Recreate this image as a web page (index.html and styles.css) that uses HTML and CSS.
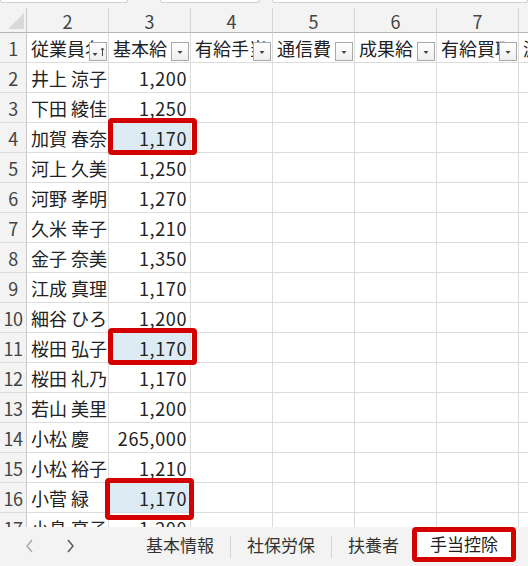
FILE: index.html
```html
<!DOCTYPE html>
<html lang="ja">
<head>
<meta charset="utf-8">
<title>手当控除</title>
<link rel="stylesheet" href="styles.css">
</head>
<body>
<div class="app">
  <div class="topbar">
    <div class="tb tb1"></div>
    <div class="tb tb2"></div>
    <div class="tb tb3"></div>
  </div>
  <div class="grid">
    <div class="corner"><svg width="16" height="16" viewBox="0 0 16 16"><polygon points="16,0 16,16 0,16" fill="#d9d9d9"/></svg></div>
    <div class="ch">2</div><div class="ch">3</div><div class="ch">4</div><div class="ch">5</div><div class="ch">6</div><div class="ch">7</div><div class="ch last">8</div>

    <div class="rh">1</div>
    <div class="c hd">従業員名<span class="fb"><svg width="18" height="19" viewBox="0 0 18 19"><polygon points="3.5,11 8.5,11 6,14" fill="#444"/><path d="M13.5 14V6M11.8 8L13.5 6L15.2 8" stroke="#444" stroke-width="1" fill="none"/></svg></span></div>
    <div class="c hd">基本給<span class="fb"><svg width="18" height="19" viewBox="0 0 18 19"><polygon points="6.5,9 11.5,9 9,12" fill="#444"/></svg></span></div>
    <div class="c hd">有給手当<span class="fb"><svg width="18" height="19" viewBox="0 0 18 19"><polygon points="6.5,9 11.5,9 9,12" fill="#444"/></svg></span></div>
    <div class="c hd">通信費<span class="fb"><svg width="18" height="19" viewBox="0 0 18 19"><polygon points="6.5,9 11.5,9 9,12" fill="#444"/></svg></span></div>
    <div class="c hd">成果給<span class="fb"><svg width="18" height="19" viewBox="0 0 18 19"><polygon points="6.5,9 11.5,9 9,12" fill="#444"/></svg></span></div>
    <div class="c hd">有給買取<span class="fb"><svg width="18" height="19" viewBox="0 0 18 19"><polygon points="6.5,9 11.5,9 9,12" fill="#444"/></svg></span></div>
    <div class="c hd last">減額</div>

    <div class="rh">2</div><div class="c">井上 涼子</div><div class="c n">1,200</div><div class="c"></div><div class="c"></div><div class="c"></div><div class="c"></div><div class="c last"></div>
    <div class="rh">3</div><div class="c">下田 綾佳</div><div class="c n">1,250</div><div class="c"></div><div class="c"></div><div class="c"></div><div class="c"></div><div class="c last"></div>
    <div class="rh">4</div><div class="c">加賀 春奈</div><div class="c n hl">1,170<span class="mark m1"></span></div><div class="c"></div><div class="c"></div><div class="c"></div><div class="c"></div><div class="c last"></div>
    <div class="rh">5</div><div class="c">河上 久美</div><div class="c n">1,250</div><div class="c"></div><div class="c"></div><div class="c"></div><div class="c"></div><div class="c last"></div>
    <div class="rh">6</div><div class="c">河野 孝明</div><div class="c n">1,270</div><div class="c"></div><div class="c"></div><div class="c"></div><div class="c"></div><div class="c last"></div>
    <div class="rh">7</div><div class="c">久米 幸子</div><div class="c n">1,210</div><div class="c"></div><div class="c"></div><div class="c"></div><div class="c"></div><div class="c last"></div>
    <div class="rh">8</div><div class="c">金子 奈美</div><div class="c n">1,350</div><div class="c"></div><div class="c"></div><div class="c"></div><div class="c"></div><div class="c last"></div>
    <div class="rh">9</div><div class="c">江成 真理</div><div class="c n">1,170</div><div class="c"></div><div class="c"></div><div class="c"></div><div class="c"></div><div class="c last"></div>
    <div class="rh">10</div><div class="c">細谷 ひろみ</div><div class="c n">1,200</div><div class="c"></div><div class="c"></div><div class="c"></div><div class="c"></div><div class="c last"></div>
    <div class="rh">11</div><div class="c">桜田 弘子</div><div class="c n hl">1,170<span class="mark m2"></span></div><div class="c"></div><div class="c"></div><div class="c"></div><div class="c"></div><div class="c last"></div>
    <div class="rh">12</div><div class="c">桜田 礼乃</div><div class="c n">1,170</div><div class="c"></div><div class="c"></div><div class="c"></div><div class="c"></div><div class="c last"></div>
    <div class="rh">13</div><div class="c">若山 美里</div><div class="c n">1,200</div><div class="c"></div><div class="c"></div><div class="c"></div><div class="c"></div><div class="c last"></div>
    <div class="rh">14</div><div class="c">小松 慶</div><div class="c n">265,000</div><div class="c"></div><div class="c"></div><div class="c"></div><div class="c"></div><div class="c last"></div>
    <div class="rh">15</div><div class="c">小松 裕子</div><div class="c n">1,210</div><div class="c"></div><div class="c"></div><div class="c"></div><div class="c"></div><div class="c last"></div>
    <div class="rh">16</div><div class="c">小菅 緑</div><div class="c n hl">1,170<span class="mark m3"></span></div><div class="c"></div><div class="c"></div><div class="c"></div><div class="c"></div><div class="c last"></div>
    <div class="rh">17</div><div class="c">小島 亮子</div><div class="c n">1,200</div><div class="c"></div><div class="c"></div><div class="c"></div><div class="c"></div><div class="c last"></div>
  </div>
  <div class="tabbar">
    <div class="nav">
      <svg class="arr" width="12" height="16" viewBox="0 0 12 16"><path d="M8 2L3 8L8 14" stroke="#a8a8a8" stroke-width="1.4" fill="none"/></svg>
      <svg class="arr" width="12" height="16" viewBox="0 0 12 16"><path d="M4 2L9 8L4 14" stroke="#555" stroke-width="1.4" fill="none"/></svg>
    </div>
    <div class="tab">基本情報</div>
    <div class="sep"></div>
    <div class="tab">社保労保</div>
    <div class="sep"></div>
    <div class="tab">扶養者</div>
    <div class="tab active">手当控除</div>
  </div>
</div>
</body>
</html>
```

FILE: styles.css
```css
* { box-sizing: border-box; }
html, body { margin: 0; padding: 0; }
body {
  background: #f3f3f3;
  font-family: "Noto Sans CJK JP", "Noto Sans", sans-serif;
  color: #222;
}
.app {
  width: 528px;
  height: 566px;
  overflow: hidden;
  display: flex;
  flex-direction: column;
  background: #f3f3f3;
}
.topbar {
  height: 8px;
  flex: none;
  display: flex;
  align-items: flex-start;
}
.tb {
  height: 3px;
  background: #fff;
  border: 1px solid #cfcfcf;
  border-top: none;
  border-radius: 0 0 4px 4px;
}
.tb1 { width: 128px; }
.tb2 { width: 100px; margin-left: 32px; }
.tb3 { flex: 1; margin-left: 12px; }

.grid {
  height: 519px;
  flex: none;
  overflow: hidden;
  display: grid;
  grid-template-columns: 27px repeat(7, 82px);
  grid-template-rows: 25px;
  grid-auto-rows: 30px;
  background: #fff;
  font-size: 18px;
}
.corner {
  background: #f3f3f3;
  border-right: 1px solid #c9c9c9;
  border-bottom: 1px solid #b5b5b5;
  display: flex;
  justify-content: flex-end;
  align-items: flex-end;
  padding: 0 2px 3px 0;
}
.corner svg { display: block; }
.ch {
  background: #f3f3f3;
  border-right: 1px solid #d6d6d6;
  border-bottom: 1px solid #b5b5b5;
  text-align: center;
  padding-top: 2px;
  line-height: 22px;
  color: #444;
}
.rh {
  background: #f3f3f3;
  border-right: 1px solid #c9c9c9;
  border-bottom: 1px solid #dcdcdc;
  text-align: center;
  line-height: 30px;
  color: #444;
  white-space: nowrap;
  letter-spacing: -0.5px;
}
.c {
  position: relative;
  border-right: 1px solid #dcdcdc;
  border-bottom: 1px solid #dcdcdc;
  line-height: 30px;
  padding: 0 4px;
  white-space: nowrap;
  overflow: hidden;
}
.c.last { border-right: none; }
.c.n { text-align: right; letter-spacing: 0.6px; padding-right: 3px; }
.c.hl { background: #dcebf4; overflow: visible; }
.c.hd { padding-right: 0; }
.fb {
  position: absolute;
  right: 1px;
  top: 9px;
  width: 18px;
  height: 19px;
  border: 1px solid #a9a9a9;
  background: linear-gradient(#ffffff, #eeeeee);
}
.fb svg { display: block; position: absolute; left: -1px; top: -1px; }
.mark {
  position: absolute;
  z-index: 2;
  border: 5px solid #d40000;
  border-radius: 4px;
}
.m1 { left: -1px; width: 89px; top: -5px; height: 37px; }
.m2 { left: -1px; width: 89px; top: -5px; height: 37px; }
.m3 { left: -4px; width: 89px; top: -5px; height: 42px; }

.tabbar {
  flex: 1;
  display: flex;
  align-items: flex-start;
  background: #f3f3f3;
  font-size: 17px;
  color: #333;
}
.nav {
  width: 130px;
  display: flex;
  gap: 28px;
  padding: 11px 0 0 24px;
}
.arr { display: block; }
.tab {
  padding: 0 16px;
  height: 39px;
  line-height: 36px;
  white-space: nowrap;
}
.sep {
  width: 1px;
  height: 22px;
  margin-top: 9px;
  background: #d4d4d4;
}
.tab.active {
  margin-left: -3px;
  width: 104px;
  height: 35px;
  padding: 0;
  text-align: center;
  line-height: 24px;
  background: #fff;
  border: 5px solid #d40000;
  border-radius: 4px;
  color: #222;
}
```
